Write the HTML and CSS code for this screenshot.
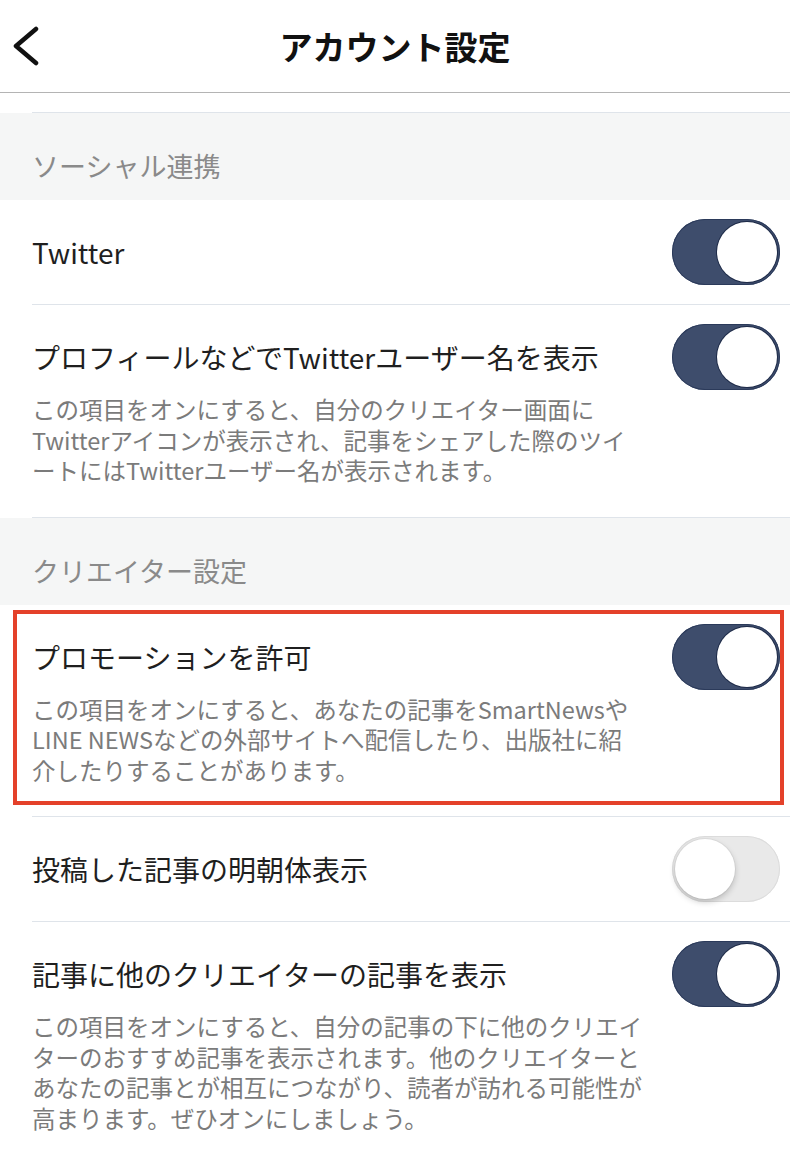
FILE: index.html
```html
<!DOCTYPE html>
<html lang="ja">
<head>
    <meta charset="UTF-8">
    <meta name="viewport" content="width=device-width, initial-scale=1.0">
    <title>アカウント設定</title>
    <link rel="stylesheet" href="styles.css">
</head>
<body>
    <header class="top-bar">
        <button class="back-btn" type="button" aria-label="戻る">
            <svg width="28" height="40" viewBox="0 0 28 40">
                <polyline points="24,3 4,20 24,37" fill="none" stroke="#111" stroke-width="4.5" stroke-linecap="round" stroke-linejoin="round"/>
            </svg>
        </button>
        <h1>アカウント設定</h1>
        <span></span>
    </header>

    <div class="settings">
        <div class="row row-stub"></div>

        <div class="section-title">ソーシャル連携</div>

        <div class="row">
            <div class="row-head">
                <span class="row-label">Twitter</span>
                <span class="toggle on"></span>
            </div>
        </div>

        <div class="row">
            <div class="row-head">
                <span class="row-label">プロフィールなどでTwitterユーザー名を表示</span>
                <span class="toggle on"></span>
            </div>
            <p class="row-note">この項目をオンにすると、自分のクリエイター画面に<br>Twitterアイコンが表示され、記事をシェアした際のツイ<br>ートにはTwitterユーザー名が表示されます。</p>
        </div>

        <div class="section-title">クリエイター設定</div>

        <div class="row marked">
            <div class="row-head">
                <span class="row-label">プロモーションを許可</span>
                <span class="toggle on"></span>
            </div>
            <p class="row-note">この項目をオンにすると、あなたの記事をSmartNewsや<br>LINE NEWSなどの外部サイトへ配信したり、出版社に紹<br>介したりすることがあります。</p>
            <span class="marker"></span>
        </div>

        <div class="row">
            <div class="row-head">
                <span class="row-label">投稿した記事の明朝体表示</span>
                <span class="toggle"></span>
            </div>
        </div>

        <div class="row">
            <div class="row-head">
                <span class="row-label">記事に他のクリエイターの記事を表示</span>
                <span class="toggle on"></span>
            </div>
            <p class="row-note">この項目をオンにすると、自分の記事の下に他のクリエイ<br>ターのおすすめ記事を表示されます。他のクリエイターと<br>あなたの記事とが相互につながり、読者が訪れる可能性が<br>高まります。ぜひオンにしましょう。</p>
        </div>
    </div>
</body>
</html>
```

FILE: styles.css
```css
* {
    box-sizing: border-box;
    margin: 0;
    padding: 0;
}

body {
    background: #fff;
    color: #1f1f1f;
    font-family: "Noto Sans CJK JP", "Noto Sans", sans-serif;
    line-break: loose;
}

.top-bar {
    display: grid;
    grid-template-columns: 70px 1fr 70px;
    align-items: center;
    height: 93px;
    border-bottom: 1px solid #b4b4b4;
}

.back-btn {
    background: none;
    border: none;
    padding-left: 12px;
    display: flex;
    align-items: center;
    cursor: pointer;
}

.top-bar h1 {
    text-align: center;
    font-size: 33px;
    font-weight: bold;
    color: #111;
    line-height: 40px;
}

.row {
    position: relative;
    margin-left: 32px;
    padding: 19px 10px 19px 0;
    border-bottom: 1px solid #dfe4ea;
}

.row-stub {
    height: 20px;
    padding: 0;
}

.row-head {
    display: flex;
    align-items: center;
    justify-content: space-between;
    min-height: 66px;
}

.row-label {
    font-size: 28px;
    line-height: 38px;
}

.row-note {
    max-width: 640px;
    margin: 4px 0 12px;
    font-size: 23.5px;
    line-height: 30.5px;
    color: #7b7b7b;
}

.section-title {
    background: #f5f6f6;
    padding: 35px 32px 16px;
    font-size: 27px;
    line-height: 36px;
    color: #8a8a8a;
}

.toggle {
    position: relative;
    flex-shrink: 0;
    width: 108px;
    height: 66px;
    border-radius: 33px;
    background: #e9e9e9;
    box-shadow: inset 0 0 0 1px #dcdcdc;
}

.toggle::after {
    content: "";
    position: absolute;
    top: 3px;
    left: 3px;
    width: 60px;
    height: 60px;
    border-radius: 50%;
    background: #fff;
    box-shadow: 0 3px 6px rgba(0, 0, 0, 0.2), 0 0 0 1px rgba(0, 0, 0, 0.04);
}

.toggle.on {
    background: #3e4d6c;
    box-shadow: inset 0 0 0 1px #2b3a5a;
}

.toggle.on::after {
    left: auto;
    right: 3px;
    box-shadow: 0 0 0 1px #1e2b48;
}

.marker {
    position: absolute;
    top: 5px;
    left: -19px;
    right: 6px;
    bottom: 11px;
    border: 4px solid #e4412a;
    pointer-events: none;
}
```
